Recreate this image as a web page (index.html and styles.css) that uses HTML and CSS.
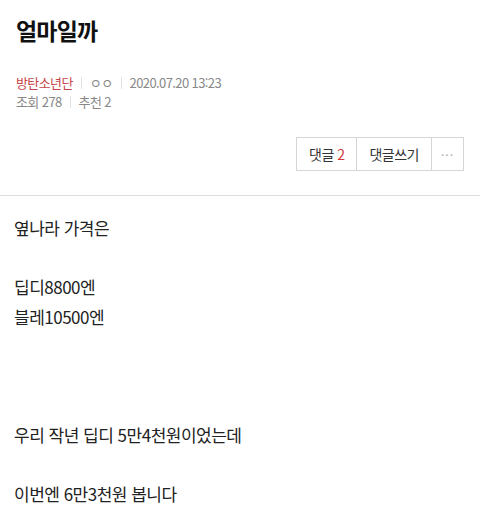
FILE: index.html
```html
<!DOCTYPE html>
<html lang="ko">
<head>
    <meta charset="UTF-8">
    <meta name="viewport" content="width=device-width, initial-scale=1.0">
    <title>얼마일까</title>
    <link rel="stylesheet" href="styles.css">
</head>
<body>
    <header class="post-header">
        <h1 class="post-title">얼마일까</h1>
        <div class="post-meta">
            <div class="meta-row">
                <span class="meta-item author">방탄소년단</span>
                <span class="meta-item">ㅇㅇ</span>
                <span class="meta-item">2020.07.20 13:23</span>
            </div>
            <div class="meta-row">
                <span class="meta-item">조회 278</span>
                <span class="meta-item">추천 2</span>
            </div>
        </div>
        <div class="post-actions">
            <button type="button" class="action-btn">댓글 <em class="count">2</em></button>
            <button type="button" class="action-btn">댓글쓰기</button>
            <button type="button" class="action-btn more">&middot;&middot;&middot;</button>
        </div>
    </header>

    <!-- Post body -->
    <article class="post-body">
        <p>옆나라 가격은</p>
        <p>&nbsp;</p>
        <p>딥디8800엔</p>
        <p>블레10500엔</p>
        <p>&nbsp;</p>
        <p>&nbsp;</p>
        <p>&nbsp;</p>
        <p>우리 작년 딥디 5만4천원이었는데</p>
        <p>&nbsp;</p>
        <p>이번엔 6만3천원 봅니다</p>
    </article>
</body>
</html>
```

FILE: styles.css
```css
/* Global */
body {
    margin: 0;
    padding: 0;
    background: #fff;
    color: #222;
    font-family: "Noto Sans CJK KR", "Noto Sans", sans-serif;
}

/* Header */
.post-header {
    padding: 14px 16px 0;
    border-bottom: 1px solid #ddd;
}

.post-title {
    margin: 0;
    font-size: 23px;
    font-weight: bold;
    line-height: 32px;
    color: #111;
    letter-spacing: -0.8px;
}

.post-meta {
    margin-top: 27px;
    font-size: 13px;
    line-height: 19px;
    color: #888;
    letter-spacing: -0.6px;
}

.meta-row {
    display: flex;
    align-items: center;
}

.meta-item + .meta-item::before {
    content: "";
    display: inline-block;
    width: 1px;
    height: 12px;
    background: #e2e2e2;
    margin: 0 8px;
    vertical-align: -1px;
}

.author {
    color: #c8454a;
}

/* Actions */
.post-actions {
    display: flex;
    justify-content: flex-end;
    padding: 26px 0 24px;
}

.action-btn {
    height: 34px;
    padding: 0 12px;
    border: 1px solid #d6d6d6;
    background: #fff;
    color: #333;
    font-family: inherit;
    font-size: 14px;
    letter-spacing: -0.5px;
    cursor: pointer;
}

.action-btn + .action-btn {
    margin-left: -1px;
}

.action-btn .count {
    font-style: normal;
    color: #d0383d;
}

.action-btn.more {
    width: 33px;
    padding: 0;
    color: #aaa;
    font-size: 12px;
    letter-spacing: 1px;
}

/* Body */
.post-body {
    padding: 17px 14px;
    font-size: 17px;
    line-height: 29.5px;
    color: #222;
    letter-spacing: -0.5px;
}

.post-body p {
    margin: 0;
}
```
